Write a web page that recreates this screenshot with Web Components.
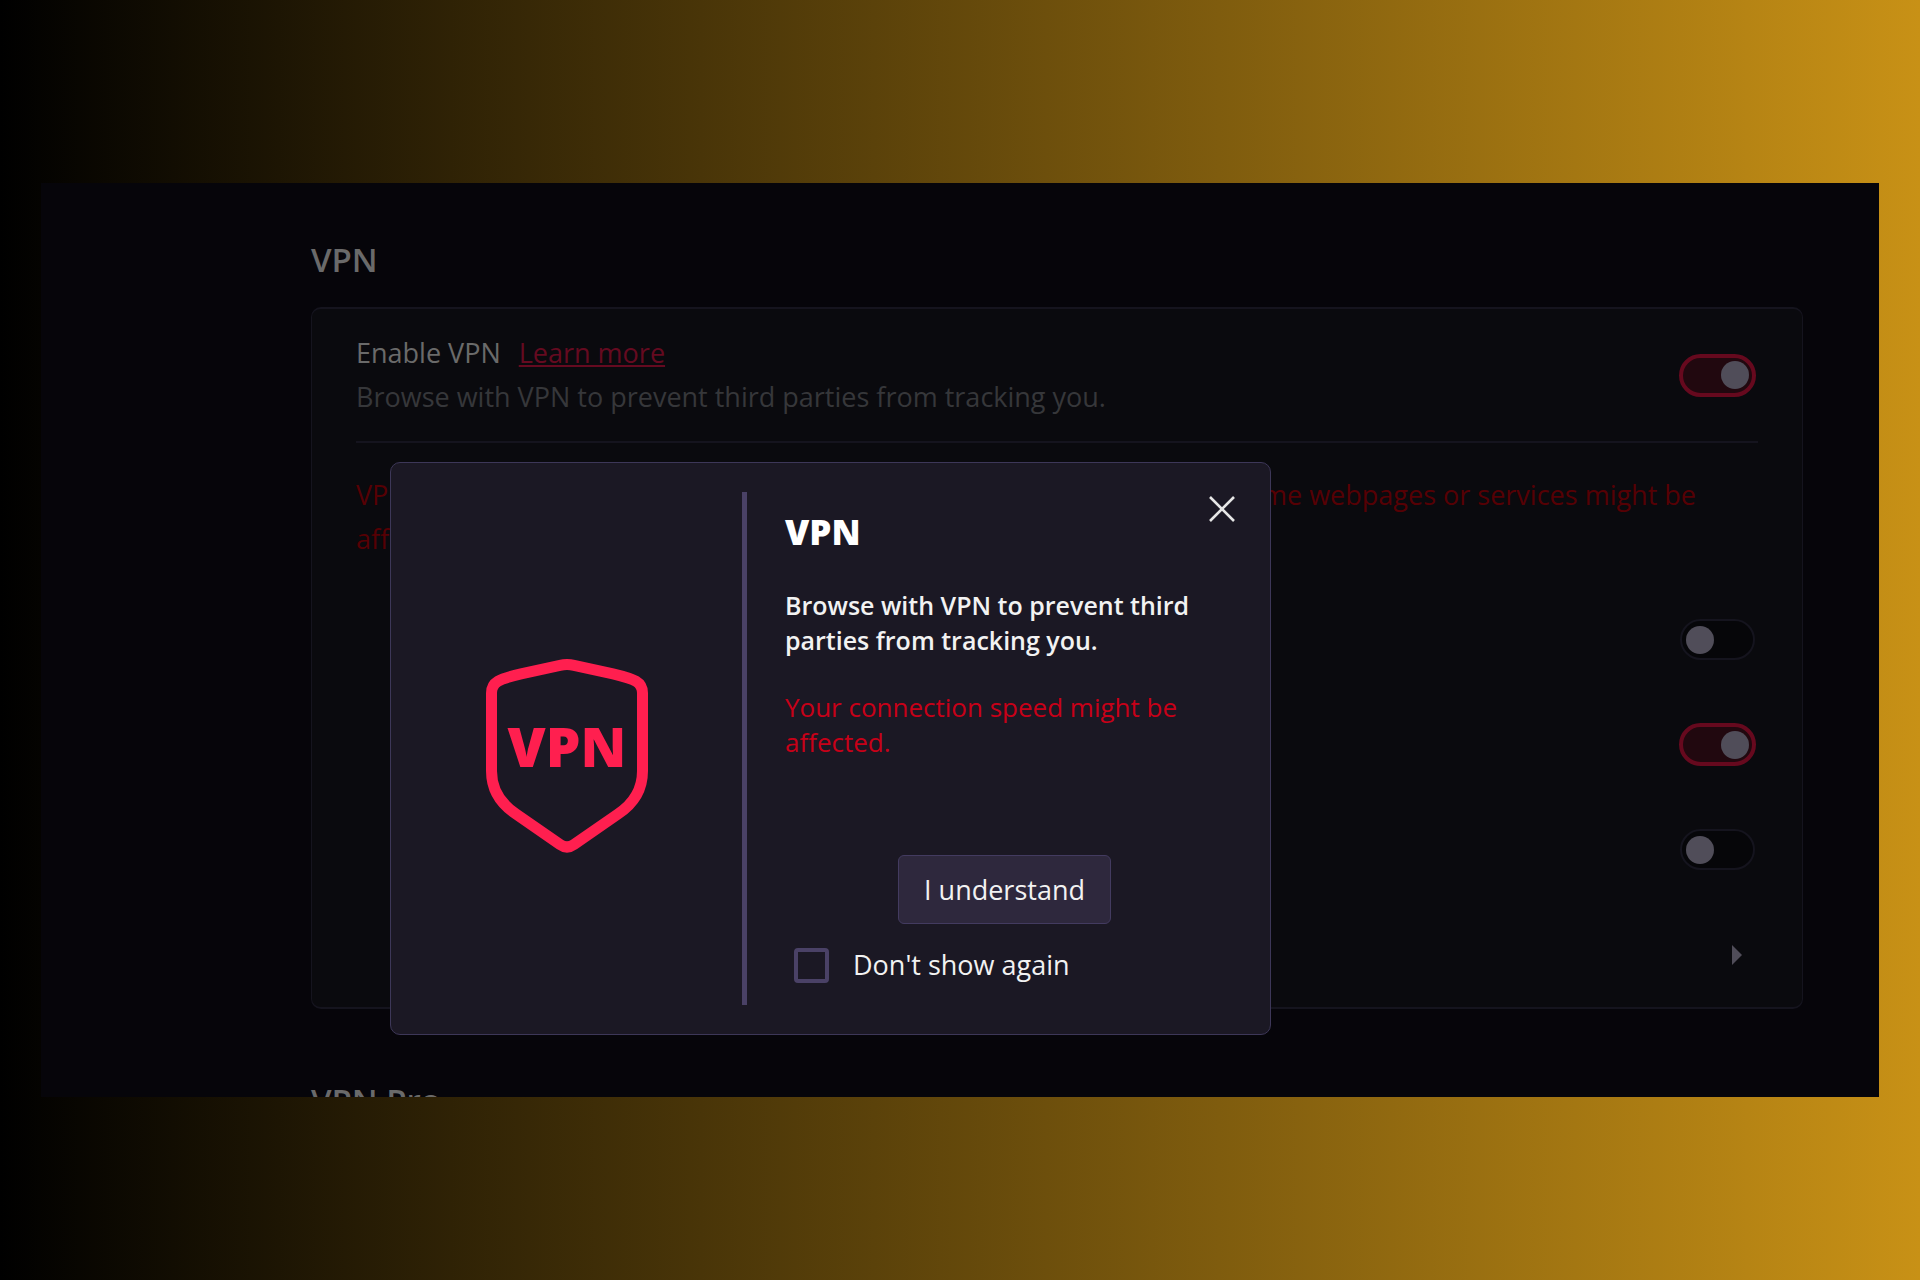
<!DOCTYPE html>
<html lang="en">
<head>
<meta charset="utf-8">
<title>VPN settings</title>
<style>
    body {
        margin: 0;
        box-sizing: border-box;
        height: 100vh;
        padding: 183px 41px;
        background: linear-gradient(to right, #000, #c89116);
        font-family: "Open Sans", "Noto Sans", sans-serif;
        font-size: 27px;
        line-height: 44px;
    }
</style>
</head>
<body>
<settings-page>
    <settings-section heading="VPN">
        <settings-row divided>
            <setting-label slot="label" name="Enable VPN" link="Learn more">Browse with VPN to prevent third parties from tracking you.</setting-label>
            <toggle-switch label="Enable VPN" checked></toggle-switch>
        </settings-row>
        <vpn-warning></vpn-warning>
        <settings-row><toggle-switch label="First option"></toggle-switch></settings-row>
        <settings-row><toggle-switch label="Second option" checked></toggle-switch></settings-row>
        <settings-row><toggle-switch label="Third option"></toggle-switch></settings-row>
        <settings-row><more-button></more-button></settings-row>
    </settings-section>
    <settings-section heading="VPN Pro"></settings-section>
    <vpn-dialog slot="dialog" heading="VPN">
        Browse with VPN to prevent third parties from tracking you.
        <span slot="warning">Your connection speed might be affected.</span>
    </vpn-dialog>
</settings-page>

<script>
class SettingsPage extends HTMLElement {
    constructor() {
        super();
        this.attachShadow({ mode: 'open' });
        this.shadowRoot.innerHTML = `
            <style>
                :host {
                    display: block;
                    position: relative;
                    box-sizing: border-box;
                    height: 100%;
                    padding: 55px 76px 0 270px;
                    overflow: hidden;
                    background: #06050a;
                }
                main {
                    display: flex;
                    flex-direction: column;
                    gap: 70px;
                }
            </style>
            <main><slot></slot></main>
            <slot name="dialog"></slot>
        `;
    }
}

class SettingsSection extends HTMLElement {
    constructor() {
        super();
        this.attachShadow({ mode: 'open' });
        this.shadowRoot.innerHTML = `
            <style>
                :host {
                    display: block;
                }
                h2 {
                    margin: 0 0 25px;
                    font-size: 33px;
                    font-weight: 600;
                    line-height: 44px;
                    color: #6a6a6a;
                }
                .card {
                    padding: 0 44px;
                    border: solid #15141e;
                    border-width: 2px 1px;
                    border-radius: 10px;
                    background: #0a0a0e;
                }
            </style>
            <h2></h2>
            <div class="card"><slot></slot></div>
        `;
    }

    connectedCallback() {
        this.shadowRoot.querySelector('h2').textContent = this.getAttribute('heading');
    }
}

class SettingsRow extends HTMLElement {
    constructor() {
        super();
        this.attachShadow({ mode: 'open' });
        this.shadowRoot.innerHTML = `
            <style>
                :host {
                    display: flex;
                    align-items: center;
                    justify-content: space-between;
                    min-height: 105px;
                }
                :host([divided]) {
                    min-height: 132px;
                    border-bottom: 2px solid #15141e;
                }
                .control {
                    display: flex;
                    justify-content: center;
                    width: 81px;
                }
            </style>
            <div><slot name="label"></slot></div>
            <div class="control"><slot></slot></div>
        `;
    }
}

class SettingLabel extends HTMLElement {
    constructor() {
        super();
        this.attachShadow({ mode: 'open' });
        this.shadowRoot.innerHTML = `
            <style>
                :host {
                    display: block;
                    color: #36373a;
                }
                .title {
                    display: flex;
                    gap: 18px;
                }
                .name {
                    color: #6a6a6a;
                }
                a {
                    color: #650a20;
                    text-underline-offset: 2px;
                }
            </style>
            <div class="title"><span class="name"></span><a href="#"></a></div>
            <div><slot></slot></div>
        `;
    }

    connectedCallback() {
        this.shadowRoot.querySelector('.name').textContent = this.getAttribute('name');
        this.shadowRoot.querySelector('a').textContent = this.getAttribute('link');
    }
}

class ToggleSwitch extends HTMLElement {
    constructor() {
        super();
        this.attachShadow({ mode: 'open' });
        this.shadowRoot.innerHTML = `
            <style>
                :host {
                    display: flex;
                }
                input {
                    appearance: none;
                    display: flex;
                    align-items: center;
                    box-sizing: border-box;
                    width: 75px;
                    height: 41px;
                    margin: 0;
                    padding: 0 4px;
                    border: 2px solid #15141e;
                    border-radius: 22px;
                    background: #060609;
                }
                input::before {
                    content: "";
                    width: 28px;
                    height: 28px;
                    border-radius: 50%;
                    background: #504d59;
                }
                input:checked {
                    justify-content: flex-end;
                    width: 77px;
                    height: 43px;
                    border: 4px solid #66091e;
                    padding: 0 3px;
                    background: #21080f;
                }
            </style>
            <input type="checkbox" role="switch">
        `;
    }

    connectedCallback() {
        const input = this.shadowRoot.querySelector('input');
        input.checked = this.hasAttribute('checked');
        input.setAttribute('aria-label', this.getAttribute('label'));
    }
}

class MoreButton extends HTMLElement {
    constructor() {
        super();
        this.attachShadow({ mode: 'open' });
        this.shadowRoot.innerHTML = `
            <style>
                :host {
                    display: flex;
                    padding-left: 38px;
                }
                button {
                    display: flex;
                    padding: 0;
                    border: 0;
                    background: none;
                }
            </style>
            <button type="button" aria-label="More">
                <svg width="10" height="20" viewBox="0 0 10 20"><path d="M0 0 10 10 0 20Z" fill="#504d59"/></svg>
            </button>
        `;
    }
}

class VpnWarning extends HTMLElement {
    constructor() {
        super();
        this.attachShadow({ mode: 'open' });
        this.shadowRoot.innerHTML = `
            <style>
                :host {
                    display: block;
                    padding: 30px 62px 26px 0;
                    color: #560004;
                }
                .line {
                    display: flex;
                    justify-content: space-between;
                }
            </style>
            <div class="line"><span>VPN</span><span>some webpages or services might be</span></div>
            <div>affected.</div>
        `;
    }
}

class VpnShield extends HTMLElement {
    constructor() {
        super();
        this.attachShadow({ mode: 'open' });
        this.shadowRoot.innerHTML = `
            <style>
                :host {
                    display: flex;
                }
                text {
                    font-size: 55px;
                    font-weight: 800;
                }
            </style>
            <svg width="162" height="194" viewBox="0 0 162 194">
                <path d="M74 6.3Q81 4.7 88 6.3L127 14.8C149 20 156.5 23 156.5 34V112C156.5 131 147 145 132 155L88 185.5Q81 190.5 74 185.5L30 155C15 145 5.5 131 5.5 112V34C5.5 23 13 20 35 14.8Z" fill="none" stroke="#ff1f4f" stroke-width="11"/>
                <text x="81" y="108" text-anchor="middle" fill="#ff1f4f">VPN</text>
            </svg>
        `;
    }
}

class VpnDialog extends HTMLElement {
    constructor() {
        super();
        this.attachShadow({ mode: 'open' });
        this.shadowRoot.innerHTML = `
            <style>
                :host {
                    display: grid;
                    grid-template-columns: 351px 1fr;
                    position: absolute;
                    top: 279px;
                    left: 349px;
                    box-sizing: border-box;
                    width: 881px;
                    padding: 29px 0;
                    border: 1px solid #3d3758;
                    border-radius: 10px;
                    background: #1b1824;
                    color: #f2f2f2;
                }
                .picture {
                    display: flex;
                    align-items: center;
                    justify-content: center;
                    padding-top: 14px;
                }
                .content {
                    display: flex;
                    flex-direction: column;
                    padding: 18px 46px 18px 38px;
                    border-left: 5px solid #4a4166;
                }
                h3 {
                    margin: 0 0 34px;
                    font-size: 35px;
                    font-weight: 800;
                    line-height: 44px;
                    color: #fff;
                }
                p {
                    margin: 0 0 32px;
                    font-size: 25px;
                    font-weight: 600;
                    line-height: 35px;
                }
                .warning {
                    margin: 0 0 95px;
                    font-size: 26px;
                    font-weight: 400;
                    color: #c80018;
                }
                button {
                    font: inherit;
                    color: inherit;
                }
                .accept {
                    align-self: center;
                    width: 213px;
                    height: 69px;
                    padding: 0;
                    border: 1px solid #433b60;
                    border-radius: 6px;
                    background: #2e283d;
                }
                label {
                    display: flex;
                    align-items: center;
                    gap: 24px;
                    margin: 19px 0 0 9px;
                }
                input {
                    appearance: none;
                    box-sizing: border-box;
                    width: 35px;
                    height: 35px;
                    margin: 0;
                    border: 4px solid #4a4166;
                    border-radius: 4px;
                }
                .close {
                    display: flex;
                    position: absolute;
                    top: 32px;
                    right: 35px;
                    padding: 0;
                    border: 0;
                    background: none;
                }
            </style>
            <div class="picture"><vpn-shield></vpn-shield></div>
            <div class="content">
                <h3></h3>
                <p><slot></slot></p>
                <p class="warning"><slot name="warning"></slot></p>
                <button class="accept" type="button">I understand</button>
                <label><input type="checkbox">Don't show again</label>
            </div>
            <button class="close" type="button" aria-label="Close">
                <svg width="26" height="28" viewBox="0 0 26 28"><path d="M1 2 25 26M25 2 1 26" fill="none" stroke="#e6e6e6" stroke-width="2.6"/></svg>
            </button>
        `;
    }

    connectedCallback() {
        this.shadowRoot.querySelector('h3').textContent = this.getAttribute('heading');
        this.shadowRoot.querySelector('.close').addEventListener('click', () => this.remove());
        this.shadowRoot.querySelector('.accept').addEventListener('click', () => this.remove());
    }
}

customElements.define('settings-page', SettingsPage);
customElements.define('settings-section', SettingsSection);
customElements.define('settings-row', SettingsRow);
customElements.define('setting-label', SettingLabel);
customElements.define('toggle-switch', ToggleSwitch);
customElements.define('more-button', MoreButton);
customElements.define('vpn-warning', VpnWarning);
customElements.define('vpn-shield', VpnShield);
customElements.define('vpn-dialog', VpnDialog);
</script>
</body>
</html>
